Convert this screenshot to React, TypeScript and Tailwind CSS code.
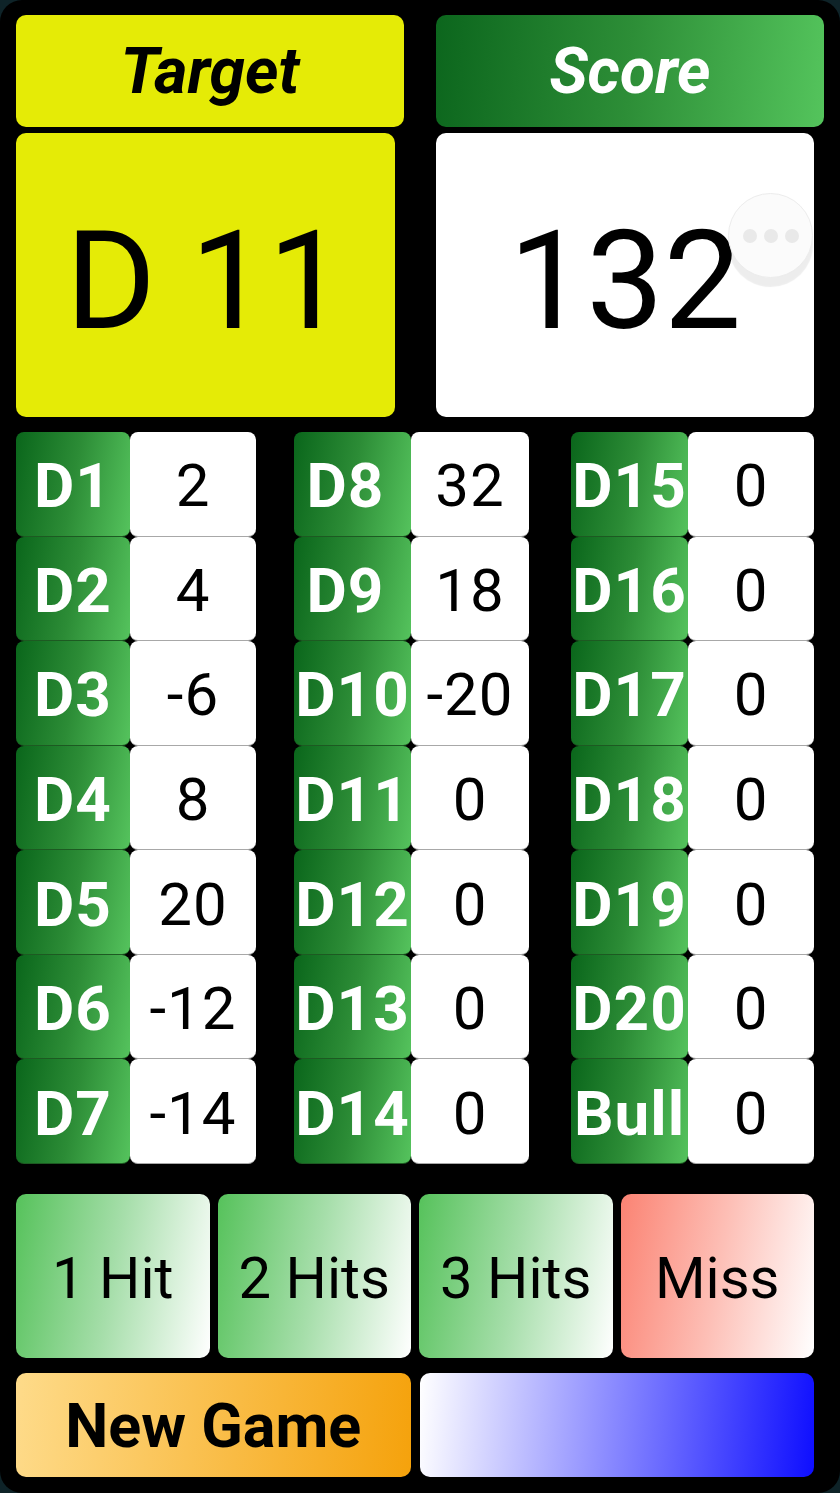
import React from "react";

const font = { fontFamily: "Roboto, 'Liberation Sans', sans-serif" };

type Cell = { label: string; value: string; shift?: boolean };

const col1: Cell[] = [
  { label: "D1", value: "2" },
  { label: "D2", value: "4" },
  { label: "D3", value: "-6" },
  { label: "D4", value: "8" },
  { label: "D5", value: "20" },
  { label: "D6", value: "-12" },
  { label: "D7", value: "-14" },
];
const col2: Cell[] = [
  { label: "D8", value: "32", shift: true },
  { label: "D9", value: "18", shift: true },
  { label: "D10", value: "-20" },
  { label: "D11", value: "0" },
  { label: "D12", value: "0" },
  { label: "D13", value: "0" },
  { label: "D14", value: "0" },
];
const col3: Cell[] = [
  { label: "D15", value: "0" },
  { label: "D16", value: "0" },
  { label: "D17", value: "0" },
  { label: "D18", value: "0" },
  { label: "D19", value: "0" },
  { label: "D20", value: "0" },
  { label: "Bull", value: "0" },
];

function Column({
  cells,
  labelW,
  valueW,
}: {
  cells: Cell[];
  labelW: string;
  valueW: string;
}) {
  return (
    <div className="grid grid-rows-[repeat(7,1fr)] h-[732px]">
      {cells.map((c) => (
        <div key={c.label} className="flex">
          <div
            className={`${labelW} ${c.shift ? "pr-[14px]" : ""} flex items-center justify-center pt-[5px] rounded-[8px] bg-[linear-gradient(100deg,#0a661b_0%,#2c8c36_50%,#55c35d_100%)] border-b border-[#1d5a22] text-white font-bold text-[62px] leading-none tracking-[1px]`}
          >
            {c.label}
          </div>
          <div
            className={`${valueW} flex items-center justify-center pt-[5px] rounded-[8px] bg-white border-b border-[#a8a8a8] text-black text-[60px] leading-none tracking-[1px]`}
          >
            {c.value}
          </div>
        </div>
      ))}
    </div>
  );
}

export default function App() {
  return (
    <div className="w-[840px] h-[1493px] bg-[#0e2328]" style={font}>
      <div className="w-full h-full bg-black rounded-[22px] pl-[16px] pt-[15px] flex flex-col">
        {/* Top section */}
        <div className="flex gap-[32px]">
          <div className="flex flex-col gap-[6px] w-[388px]">
            <div className="h-[112px] rounded-[10px] bg-[#e5eb06] flex items-center justify-center pt-[2px] text-black font-bold italic text-[64px] leading-none">
              Target
            </div>
            <div className="h-[284px] w-[379px] rounded-[10px] bg-[#e5eb06] flex items-center justify-center pt-[12px] text-black text-[138px] leading-none">
              D 11
            </div>
          </div>
          <div className="flex flex-col gap-[6px] w-[388px]">
            <div className="h-[112px] rounded-[10px] bg-[linear-gradient(95deg,#0c661d_0%,#2d8e37_50%,#54c45c_100%)] flex items-center justify-center pt-[2px] text-white font-bold italic text-[64px] leading-none">
              Score
            </div>
            <div className="relative h-[284px] w-[378px] rounded-[10px] bg-white flex items-center justify-center pt-[12px] text-black text-[138px] leading-none">
              132
              <div className="absolute left-[292px] top-[60px] w-[85px] h-[85px] rounded-full bg-[#fbfbfb] border border-[#ececec] shadow-[0_9px_1px_rgba(0,0,0,0.07)] flex items-center justify-center gap-[7px]">
                <span className="w-[14px] h-[14px] rounded-full bg-[#e9e9e9]" />
                <span className="w-[14px] h-[14px] rounded-full bg-[#e9e9e9]" />
                <span className="w-[14px] h-[14px] rounded-full bg-[#e9e9e9]" />
              </div>
            </div>
          </div>
        </div>

        {/* Grid */}
        <div className="flex mt-[15px]">
          <Column cells={col1} labelW="w-[114px]" valueW="w-[126px]" />
          <div className="w-[38px]" />
          <Column cells={col2} labelW="w-[117px]" valueW="w-[118px]" />
          <div className="w-[42px]" />
          <Column cells={col3} labelW="w-[117px]" valueW="w-[126px]" />
        </div>

        {/* Hit buttons */}
        <div className="flex gap-[8px] mt-[30px] w-[798px] h-[164px]">
          <div className="flex-1 rounded-[10px] bg-[linear-gradient(100deg,#56c25b_0%,#a6deaa_50%,#ffffff_100%)] flex items-center justify-center pt-[3px] text-black text-[58px] leading-none">
            1 Hit
          </div>
          <div className="flex-1 rounded-[10px] bg-[linear-gradient(100deg,#56c25b_0%,#a6deaa_50%,#ffffff_100%)] flex items-center justify-center pt-[3px] text-black text-[58px] leading-none">
            2 Hits
          </div>
          <div className="flex-1 rounded-[10px] bg-[linear-gradient(100deg,#56c25b_0%,#a6deaa_50%,#ffffff_100%)] flex items-center justify-center pt-[3px] text-black text-[58px] leading-none">
            3 Hits
          </div>
          <div className="flex-1 rounded-[10px] bg-[linear-gradient(100deg,#fb8373_0%,#fdbfb6_50%,#ffffff_100%)] flex items-center justify-center pt-[3px] text-black text-[58px] leading-none">
            Miss
          </div>
        </div>

        {/* Bottom row */}
        <div className="flex gap-[9px] mt-[15px] w-[798px] h-[104px]">
          <div className="flex-1 rounded-[10px] bg-[linear-gradient(95deg,#fedb8a_0%,#f5a20c_100%)] flex items-center justify-center pt-[3px] text-black font-bold text-[61px] leading-none">
            New Game
          </div>
          <div className="flex-1 rounded-[10px] bg-[linear-gradient(95deg,#ffffff_0%,#0e0eff_100%)]" />
        </div>
      </div>
    </div>
  );
}
